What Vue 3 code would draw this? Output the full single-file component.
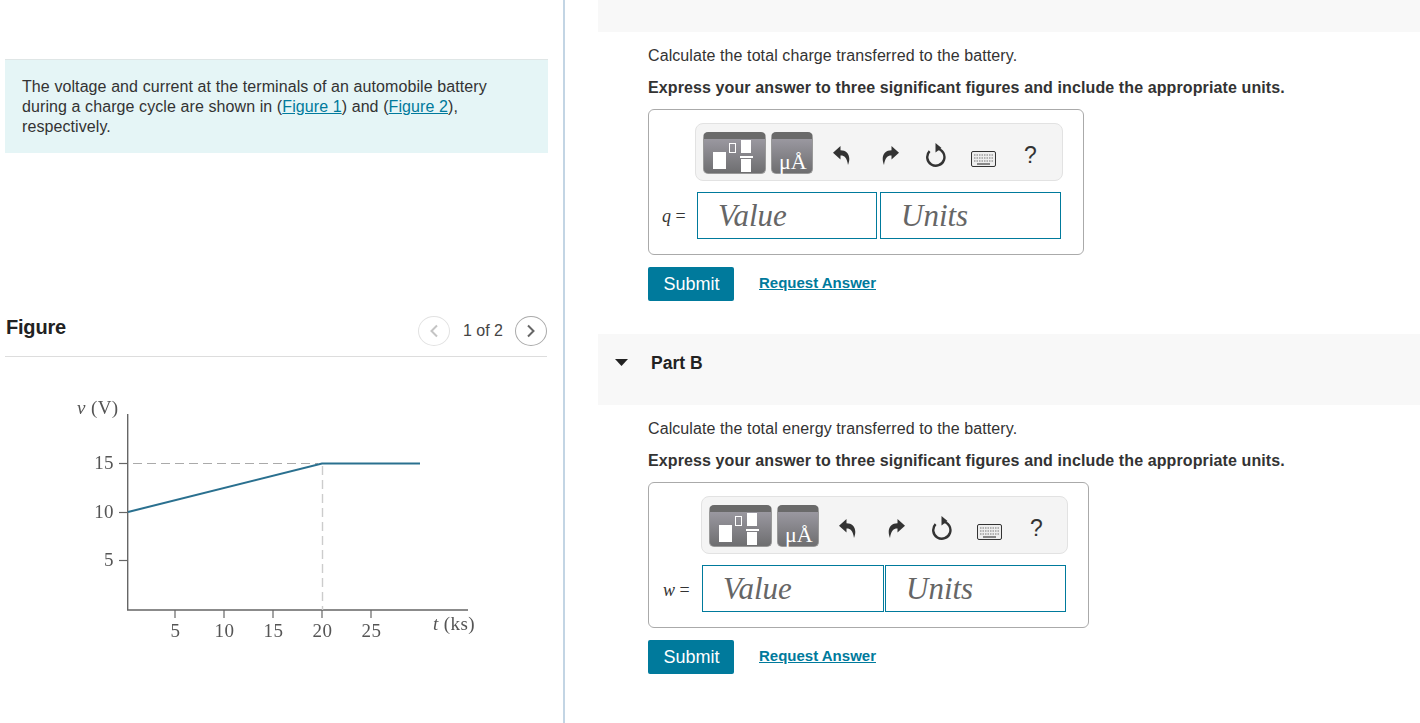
<script setup>
const parts = [
  { key: 'a', top: 'first', q: 'Calculate the total charge transferred to the battery.', sym: 'q' },
  { key: 'b', top: 'second', q: 'Calculate the total energy transferred to the battery.', sym: 'w' },
]
const yTicks = [
  { label: '15', y: 463 },
  { label: '10', y: 512 },
  { label: '5', y: 560 },
]
const xTicks = [
  { label: '5', x: 175 },
  { label: '10', x: 224 },
  { label: '15', x: 273 },
  { label: '20', x: 322 },
  { label: '25', x: 371 },
]
</script>

<template>
  <div class="page">
    <div class="left">
      <div class="intro">
        The voltage and current at the terminals of an automobile battery
        during a charge cycle are shown in (<a>Figure 1</a>) and (<a>Figure 2</a>),
        respectively.
      </div>
      <div class="figure-head">
        <span class="figure-title">Figure</span>
        <div class="pager">
          <span class="round off">
            <svg width="10" height="14" viewBox="0 0 10 14"><path d="M8 1.5 2.5 7 8 12.5" fill="none" stroke="#c4c4c4" stroke-width="2" /></svg>
          </span>
          <span class="count">1 of 2</span>
          <span class="round">
            <svg width="10" height="14" viewBox="0 0 10 14"><path d="M2 1.5 7.5 7 2 12.5" fill="none" stroke="#666" stroke-width="2" /></svg>
          </span>
        </div>
      </div>
      <svg class="chart" width="543" height="250" viewBox="5 390 543 250">
        <g filter="url(#soft)">
          <path d="M127.700 414V610H468" fill="none" stroke="#666" stroke-width="1.400" />
          <path d="M133 463.500H318" stroke="#aaa" stroke-dasharray="9 5" />
          <path d="M322.500 466V610" stroke="#ccc" stroke-width="1.400" stroke-dasharray="9 5" />
          <line v-for="t in yTicks" :key="t.y" x1="119" x2="127" :y1="t.y + 0.5" :y2="t.y + 0.5" stroke="#666" stroke-width="1.200" />
          <line v-for="t in xTicks" :key="t.x" :x1="t.x" :x2="t.x" y1="610" y2="618" stroke="#666" stroke-width="1.200" />
          <path d="M128 512 322 463.500H420" fill="none" stroke="#2b708f" stroke-width="2" />
          <g class="chart-text">
            <text x="77" y="414"><tspan font-style="italic">v</tspan> (V)</text>
            <text v-for="t in yTicks" :key="t.y" x="114" :y="t.y + 6" text-anchor="end">{{ t.label }}</text>
            <text v-for="t in xTicks" :key="t.x" :x="t.x + 0.5" y="637" text-anchor="middle">{{ t.label }}</text>
            <text x="433" y="630"><tspan font-style="italic">t</tspan> (ks)</text>
          </g>
        </g>
        <defs>
          <filter id="soft" x="-5%" y="-5%" width="110%" height="110%"><feGaussianBlur stdDeviation="0.35" /></filter>
        </defs>
      </svg>
    </div>

    <div class="right">
      <div class="strip"></div>
      <section v-for="p in parts" :key="p.key" class="part" :class="p.top">
        <div v-if="p.key === 'b'" class="part-head">
          <svg width="13" height="7" viewBox="0 0 13 7"><path d="M0 0H13L6.500 7Z" fill="#222" /></svg>
          <span>Part B</span>
        </div>
        <p class="question">{{ p.q }}</p>
        <p class="express">Express your answer to three significant figures and include the appropriate units.</p>
        <div class="answer">
          <div class="toolbar">
            <div class="tool tool-wide">
              <i class="sq big"></i>
              <i class="sq tiny"></i>
              <i class="sq num"></i>
              <i class="bar"></i>
              <i class="sq den"></i>
            </div>
            <div class="tool tool-unit"><span class="mu">μÅ</span></div>
            <svg class="ic undo" width="17" height="19" viewBox="0 0 17 19"><path d="M7.500 0 0 6.700 7.500 13.500V9.500C11 9.300 14 11.500 15 19 18.500 10 14.500 4.300 7.500 4.300Z" fill="#333" /></svg>
            <svg class="ic redo" width="18" height="19" viewBox="0 0 18 19"><path d="M10.500 0 18 6.700 10.500 13.500V9.500C7 9.300 4 11.500 3 19-.5 10 3.500 4.300 10.500 4.300Z" fill="#333" /></svg>
            <svg class="ic reset" width="20" height="24" viewBox="0 0 20 24"><path d="M11 5.600A8.600 8.600 0 1 1 3.600 8.200" fill="none" stroke="#333" stroke-width="2.400" /><path d="M9.500 0 15.500 5 9.500 9.500Z" fill="#333" /></svg>
            <svg class="ic keys" width="25" height="16" viewBox="0 0 25 16">
              <rect x=".5" y=".5" width="24" height="15" rx="1.500" fill="#eee" stroke="#333" />
              <path d="M3 4H22M3 7H22M3 10H22" stroke="#777" stroke-width="1.200" stroke-dasharray="1.500 1" />
              <path d="M6 13H19" stroke="#444" stroke-width="1.200" />
            </svg>
            <span class="help">?</span>
          </div>
          <div class="entry">
            <span class="sym"><i>{{ p.sym }}</i> =</span>
            <div class="field value">Value</div>
            <div class="field units">Units</div>
          </div>
        </div>
        <div class="actions">
          <button class="submit">Submit</button>
          <a class="request">Request Answer</a>
        </div>
      </section>
    </div>
  </div>
</template>

<style>
html, body { margin: 0; background: #fff; overflow: hidden; }
</style>

<style scoped>
.page {
  display: flex;
  width: 1420px;
  height: 723px;
  overflow: hidden;
  font-family: "Liberation Sans", Arial, sans-serif;
  color: #333;
}
.left {
  box-sizing: border-box;
  width: 565px;
  height: 723px;
  padding: 59px 15px 0 5px;
  border-right: 2px solid #c3d5e4;
}
.intro {
  box-sizing: border-box;
  height: 94px;
  padding: 17px 40px 0 17px;
  background: #e5f5f6;
  border-top: 1px solid #dfe6e6;
  font-size: 16px;
  line-height: 20px;
  letter-spacing: 0.09px;
}
.intro a { color: #007a9c; text-decoration: underline; }
.figure-head {
  box-sizing: border-box;
  display: flex;
  justify-content: space-between;
  align-items: center;
  height: 60px;
  margin: 144px 1px 0 0;
  padding: 4px 0 0;
  border-bottom: 1px solid #ddd;
}
.figure-title { font-size: 20px; font-weight: 700; color: #222; margin: -2px 0 0 1px; letter-spacing: -0.2px; }
.pager { display: flex; align-items: center; margin-top: 4px; }
.round {
  box-sizing: border-box;
  display: flex;
  align-items: center;
  justify-content: center;
  width: 32px;
  height: 30px;
  border: 1px solid #aaa;
  border-radius: 50%;
}
.round.off { border-color: #e2e2e2; }
.count { margin: 0 12px 0 13px; font-size: 16px; color: #444; }
.chart { display: block; margin-top: 33px; }
.chart-text { font-family: "Liberation Serif", serif; font-size: 19px; letter-spacing: 0.4px; fill: #555; }
.right { flex: 1; padding-left: 33px; }
.strip { height: 32px; background: #f8f8f8; }
.part { padding-left: 50px; }
.question { margin: 14px 0 0; font-size: 16px; line-height: 20px; letter-spacing: 0.09px; }
.express { margin: 12px 0 0; font-size: 16px; line-height: 20px; font-weight: 700; letter-spacing: 0.11px; }
.answer {
  box-sizing: border-box;
  width: 436px;
  height: 146px;
  margin-top: 11px;
  padding: 13px 20px 0 46px;
  border: 1px solid #aaa;
  border-radius: 6px;
}
.second .answer { width: 441px; padding-left: 52px; }
.toolbar {
  box-sizing: border-box;
  display: flex;
  align-items: center;
  height: 58px;
  padding-left: 7px;
  background: #f4f4f4;
  border: 1px solid #e2e2e2;
  border-radius: 8px;
}
.tool {
  position: relative;
  box-sizing: border-box;
  height: 42px;
  margin-top: 2px;
  border-radius: 5px;
  border: 1px solid #999;
  border-top: 7px solid #6a6a6a;
  background: linear-gradient(#9a98a0, #6e6e70);
}
.tool-wide { width: 63px; }
.tool-unit { width: 42px; margin-left: 5px; }
.sq { position: absolute; background: #fff; }
.big { left: 9px; top: 13px; width: 13px; height: 17px; }
.tiny { left: 25px; top: 4px; width: 7px; height: 10px; background: none; border: 1px solid #fff; box-sizing: border-box; }
.num { left: 37px; top: 1px; width: 10px; height: 13px; }
.bar { position: absolute; left: 36px; top: 17px; width: 13px; height: 2px; background: #fff; }
.den { left: 37px; top: 20px; width: 10px; height: 13px; }
.mu {
  position: absolute;
  left: 7px;
  bottom: 0;
  font-family: "Liberation Serif", serif;
  font-size: 22px;
  line-height: 22px;
  color: #fff;
}
.ic { flex: none; margin-top: 6px; }
.undo { margin-left: 20px; }
.redo { margin-left: 31px; }
.reset { margin-left: 27px; }
.keys { margin-left: 25px; margin-top: 13px; }
.help { margin: 6px 0 0 28px; font-size: 23px; color: #333; }
.entry { display: flex; align-items: center; margin-top: 11px; }
.sym {
  box-sizing: border-box;
  width: 37px;
  margin-left: -35px;
  padding: 1px 0 0 2px;
  font-family: "Liberation Serif", serif;
  font-size: 18px;
  white-space: nowrap;
}
.second .sym { width: 41px; margin-left: -40px; padding: 3px 0 0 2px; }
.field {
  box-sizing: border-box;
  height: 47px;
  padding: 0 20px;
  border: 1px solid #007a9c;
  font-family: "Liberation Serif", serif;
  font-style: italic;
  font-size: 31px;
  line-height: 45px;
  color: #666;
}
.value { width: 180px; }
.units { width: 181px; margin-left: 3px; }
.second .value { width: 182px; }
.second .units { margin-left: 1px; }
.actions { display: flex; align-items: center; margin-top: 12px; height: 34px; }
.submit {
  width: 86px;
  height: 34px;
  padding: 1px 0 0 1px;
  border: 0;
  border-radius: 2px;
  background: #007a9c;
  color: #fff;
  font-family: inherit;
  font-size: 18px;
}
.request { margin: -4px 0 0 25px; font-size: 15px; font-weight: 700; color: #007a9c; text-decoration: underline; }
.part-head {
  display: flex;
  align-items: center;
  gap: 23px;
  box-sizing: border-box;
  height: 71px;
  margin: 33px 0 0 -50px;
  padding: 0 0 13px 17px;
  background: #f8f8f8;
  font-size: 17.5px;
  font-weight: 700;
  color: #222;
}
.part-head svg { margin-top: -2px; }
</style>
